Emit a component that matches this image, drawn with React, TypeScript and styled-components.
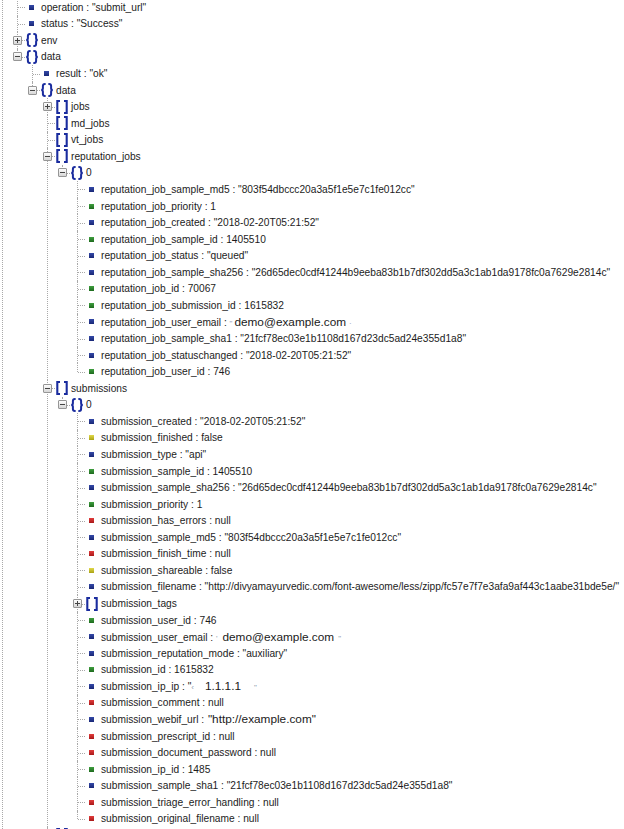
import React from 'react';
import styled, { createGlobalStyle } from 'styled-components';

const ROW = 16.57;
const LINE = '#a9a9a9';

const Global = createGlobalStyle`
  html, body { margin: 0; padding: 0; background: #fff; }
  body { font-family: "Liberation Sans", Arial, Helvetica, sans-serif; overflow: hidden; }
`;

const Page = styled.div`
  position: relative;
  height: 829px;
  overflow: hidden;
  padding-left: 9px;
  &::before {
    content: '';
    position: absolute;
    left: 2px;
    top: 0;
    bottom: 0;
    border-left: 1px dotted ${LINE};
  }
`;

const List = styled.ul<{ $root?: boolean }>`
  list-style: none;
  margin: ${(p) => (p.$root ? '-1px 0 0 0' : '0 0 0 15px')};
  padding: 0;
`;

const Item = styled.li<{ $last?: boolean }>`
  position: relative;
  &::before {
    content: '';
    position: absolute;
    left: 8px;
    top: 0;
    ${(p) => (p.$last ? `height: ${ROW / 2}px;` : 'bottom: 0;')}
    border-left: 1px dotted ${LINE};
  }
`;

const Row = styled.div`
  position: relative;
  display: flex;
  align-items: center;
  height: ${ROW}px;
  white-space: nowrap;
  font-size: 10.2px;
  color: #1c1c1c;
  &::after {
    content: '';
    position: absolute;
    left: 9px;
    width: 9px;
    top: 50%;
    border-top: 1px dotted ${LINE};
  }
`;

const ToggleSlot = styled.span`
  position: relative;
  z-index: 1;
  flex: none;
  width: 16px;
  height: 100%;
  display: flex;
  align-items: center;
`;

const ToggleBox = styled.span<{ $open: boolean }>`
  position: relative;
  margin-left: 4px;
  width: 9px;
  height: 9px;
  box-sizing: border-box;
  border: 1px solid #969696;
  border-radius: 1px;
  background: linear-gradient(#fdfdfd, #d6d6d6);
  &::before {
    content: '';
    position: absolute;
    left: 1px;
    top: 3px;
    width: 5px;
    height: 1px;
    background: #444;
  }
  &::after {
    content: '';
    display: ${(p) => (p.$open ? 'none' : 'block')};
    position: absolute;
    left: 3px;
    top: 1px;
    width: 1px;
    height: 5px;
    background: #444;
  }
`;

const IconSlot = styled.span`
  position: relative;
  z-index: 1;
  flex: none;
  width: 14px;
  height: 100%;
  display: flex;
  align-items: center;
  background: #fff;
`;

const COLORS: Record<string, [string, string]> = {
  str: ['#3449a8', '#182776'],
  num: ['#3f9f3f', '#1d6a1d'],
  bool: ['#e0d84a', '#aaa214'],
  nul: ['#e23c3c', '#a81818'],
};

const Square = styled.span<{ $t: string }>`
  margin-left: 4px;
  width: 5px;
  height: 5px;
  background: linear-gradient(${(p) => COLORS[p.$t][0]}, ${(p) => COLORS[p.$t][1]});
`;

const Label = styled.span`
  margin-left: 2px;
`;

const Big = styled.span<{ $ml?: number }>`
  font-size: 11.8px;
  color: #1a1a1a;
  margin-left: ${(p) => p.$ml ?? 0}px;
`;

const Faint = styled.span<{ $ml?: number }>`
  color: #8d9bb0;
  font-size: 8px;
  margin-left: ${(p) => p.$ml ?? 0}px;
`;

const ICON = '#1a2c9e';

const Braces = () => (
  <svg width="14" height="14" viewBox="0 0 14 14" fill="none" stroke={ICON} strokeWidth="2" strokeLinecap="round">
    <path d="M4.9 1 C3.3 1 2.9 1.5 2.9 2.9 V5.3 C2.9 6.4 2.4 7 1.2 7 C2.4 7 2.9 7.6 2.9 8.7 V11.1 C2.9 12.5 3.3 13 4.9 13" />
    <path d="M9.1 1 C10.7 1 11.1 1.5 11.1 2.9 V5.3 C11.1 6.4 11.6 7 12.8 7 C11.6 7 11.1 7.6 11.1 8.7 V11.1 C11.1 12.5 10.7 13 9.1 13" />
  </svg>
);

const Brackets = () => (
  <svg width="14" height="14" viewBox="0 0 14 14" fill="none" stroke={ICON} strokeWidth="2.1">
    <path d="M5 1 H2.3 V13 H5" />
    <path d="M9 1 H11.7 V13 H9" />
  </svg>
);

type T = 'str' | 'num' | 'bool' | 'nul';
type Node = {
  label: React.ReactNode;
  kind: 'obj' | 'arr' | 'leaf';
  t?: T;
  toggle?: 'open' | 'closed' | 'none';
  children?: Node[];
};

const leaf = (t: T, label: React.ReactNode): Node => ({ kind: 'leaf', t, label });
const s = (k: string, v: string) => leaf('str', `${k} : "${v}"`);
const n = (k: string, v: string) => leaf('num', `${k} : ${v}`);
const b = (k: string, v: string) => leaf('bool', `${k} : ${v}`);
const z = (k: string) => leaf('nul', `${k} : null`);

const tree: Node[] = [
  s('operation', 'submit_url'),
  s('status', 'Success'),
  { kind: 'obj', label: 'env', toggle: 'closed' },
  {
    kind: 'obj',
    label: 'data',
    toggle: 'open',
    children: [
      s('result', 'ok'),
      {
        kind: 'obj',
        label: 'data',
        toggle: 'open',
        children: [
          { kind: 'arr', label: 'jobs', toggle: 'closed' },
          { kind: 'arr', label: 'md_jobs', toggle: 'none' },
          { kind: 'arr', label: 'vt_jobs', toggle: 'none' },
          {
            kind: 'arr',
            label: 'reputation_jobs',
            toggle: 'open',
            children: [
              {
                kind: 'obj',
                label: '0',
                toggle: 'open',
                children: [
                  s('reputation_job_sample_md5', '803f54dbccc20a3a5f1e5e7c1fe012cc'),
                  n('reputation_job_priority', '1'),
                  s('reputation_job_created', '2018-02-20T05:21:52'),
                  n('reputation_job_sample_id', '1405510'),
                  s('reputation_job_status', 'queued'),
                  s('reputation_job_sample_sha256', '26d65dec0cdf41244b9eeba83b1b7df302dd5a3c1ab1da9178fc0a7629e2814c'),
                  n('reputation_job_id', '70067'),
                  n('reputation_job_submission_id', '1615832'),
                  leaf(
                    'str',
                    <>
                      reputation_job_user_email : <Faint>"</Faint>
                      <Big $ml={2}>demo@example.com</Big>
                      <Faint $ml={3}>·</Faint>
                    </>
                  ),
                  s('reputation_job_sample_sha1', '21fcf78ec03e1b1108d167d23dc5ad24e355d1a8'),
                  s('reputation_job_statuschanged', '2018-02-20T05:21:52'),
                  n('reputation_job_user_id', '746'),
                ],
              },
            ],
          },
          {
            kind: 'arr',
            label: 'submissions',
            toggle: 'open',
            children: [
              {
                kind: 'obj',
                label: '0',
                toggle: 'open',
                children: [
                  s('submission_created', '2018-02-20T05:21:52'),
                  b('submission_finished', 'false'),
                  s('submission_type', 'api'),
                  n('submission_sample_id', '1405510'),
                  s('submission_sample_sha256', '26d65dec0cdf41244b9eeba83b1b7df302dd5a3c1ab1da9178fc0a7629e2814c'),
                  n('submission_priority', '1'),
                  z('submission_has_errors'),
                  s('submission_sample_md5', '803f54dbccc20a3a5f1e5e7c1fe012cc'),
                  z('submission_finish_time'),
                  b('submission_shareable', 'false'),
                  s(
                    'submission_filename',
                    'http://divyamayurvedic.com/font-awesome/less/zipp/fc57e7f7e3afa9af443c1aabe31bde5e/'
                  ),
                  { kind: 'arr', label: 'submission_tags', toggle: 'closed' },
                  n('submission_user_id', '746'),
                  leaf(
                    'str',
                    <>
                      submission_user_email : <Faint>'</Faint>
                      <Big $ml={5}>demo@example.com</Big>
                      <Faint $ml={4}>"</Faint>
                    </>
                  ),
                  s('submission_reputation_mode', 'auxiliary'),
                  n('submission_id', '1615832'),
                  leaf(
                    'str',
                    <>
                      submission_ip_ip : "<Faint>‹</Faint>
                      <Big $ml={11}>1.1.1.1</Big>
                      <Faint $ml={13}>"</Faint>
                    </>
                  ),
                  z('submission_comment'),
                  leaf(
                    'str',
                    <>
                      submission_webif_url : <Big $ml={1}>"http://example.com"</Big>
                    </>
                  ),
                  z('submission_prescript_id'),
                  z('submission_document_password'),
                  n('submission_ip_id', '1485'),
                  s('submission_sample_sha1', '21fcf78ec03e1b1108d167d23dc5ad24e355d1a8'),
                  z('submission_triage_error_handling'),
                  z('submission_original_filename'),
                ],
              },
            ],
          },
          { kind: 'arr', label: 'errors', toggle: 'closed' },
        ],
      },
    ],
  },
];

const TreeNode: React.FC<{ node: Node; last: boolean }> = ({ node, last }) => {
  const toggle = node.kind === 'leaf' ? 'none' : node.toggle ?? 'none';
  return (
    <Item $last={last}>
      <Row>
        <ToggleSlot>{toggle !== 'none' && <ToggleBox $open={toggle === 'open'} />}</ToggleSlot>
        <IconSlot>
          {node.kind === 'leaf' && <Square $t={node.t!} />}
          {node.kind === 'obj' && <Braces />}
          {node.kind === 'arr' && <Brackets />}
        </IconSlot>
        <Label>{node.label}</Label>
      </Row>
      {node.children && (
        <List>
          {node.children.map((c, i) => (
            <TreeNode key={i} node={c} last={i === node.children!.length - 1} />
          ))}
        </List>
      )}
    </Item>
  );
};

export default function App() {
  return (
    <>
      <Global />
      <Page>
        <List $root>
          {tree.map((c, i) => (
            <TreeNode key={i} node={c} last={i === tree.length - 1} />
          ))}
        </List>
      </Page>
    </>
  );
}
